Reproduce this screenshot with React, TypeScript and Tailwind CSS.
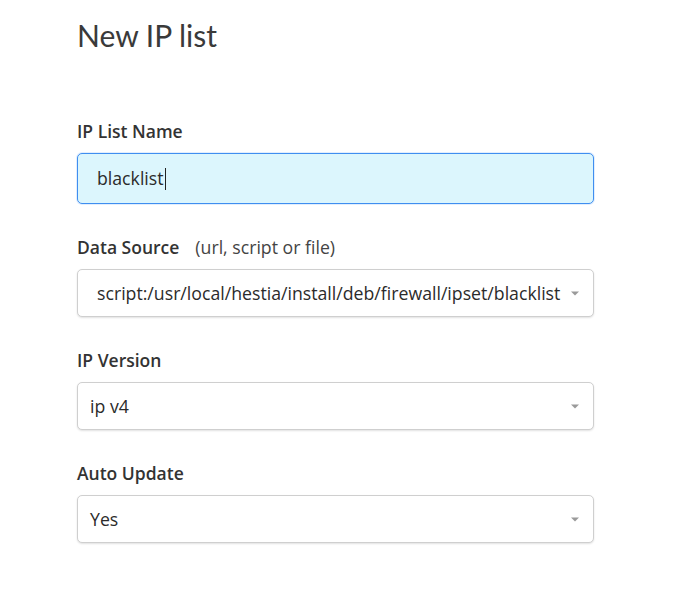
import React from "react";

function Arrow() {
  return (
    <svg width="8" height="5" viewBox="0 0 8 5" className="shrink-0">
      <path d="M0 0.5 H8 L4 4.5 Z" fill="#9a9a9a" />
    </svg>
  );
}

function SelectBox({ value, pl }: { value: string; pl: string }) {
  return (
    <div
      className={`flex items-center justify-between h-[48px] w-[517px] rounded-[5px] border border-[#cfcfcf] bg-white shadow-[0_1px_2px_rgba(0,0,0,0.12)] ${pl} pr-[14px] text-[17.7px] text-[#2b2b2b]`}
    >
      <span className="whitespace-nowrap">{value}</span>
      <Arrow />
    </div>
  );
}

export default function App() {
  return (
    <div
      className="w-[700px] h-[604px] bg-white pl-[77px] text-[#333]"
      style={{ fontFamily: "'Open Sans', Lato, sans-serif" }}
    >
      <div
        className="pt-[17px] text-[30px] leading-[36px] text-[#3a3a3a] font-normal"
        style={{ fontFamily: "Lato, 'Open Sans', sans-serif" }}
      >
        New IP list
      </div>
      <div className="mt-[66px]">
        <div className="text-[17.5px] leading-[24px] font-semibold text-[#333] mb-[10px]">
          IP List Name
        </div>
        <div className="flex items-center h-[51px] w-[517px] rounded-[5px] border border-[#3f8ef0] bg-[#dcf6fd] pl-[19px] text-[17.7px] text-[#2b2b2b] shadow-[0_0_0_1px_rgba(63,142,240,0.15)]">
          <span>blacklist</span>
          <span className="inline-block w-[1px] h-[22px] bg-[#222] ml-[1px]" />
        </div>
      </div>
      <div className="mt-[31px]">
        <div className="text-[17.5px] leading-[24px] text-[#333] mb-[10px] flex items-baseline">
          <span className="font-semibold">Data Source</span>
          <span className="ml-[16px] text-[17.7px] font-normal text-[#444]">(url, script or file)</span>
        </div>
        <SelectBox value="script:/usr/local/hestia/install/deb/firewall/ipset/blacklist" pl="pl-[19px]" />
      </div>
      <div className="mt-[31px]">
        <div className="text-[17.5px] leading-[24px] font-semibold text-[#333] mb-[10px]">
          IP Version
        </div>
        <SelectBox value="ip v4" pl="pl-[12px]" />
      </div>
      <div className="mt-[31px]">
        <div className="text-[17.5px] leading-[24px] font-semibold text-[#333] mb-[10px]">
          Auto Update
        </div>
        <SelectBox value="Yes" pl="pl-[12px]" />
      </div>
    </div>
  );
}
